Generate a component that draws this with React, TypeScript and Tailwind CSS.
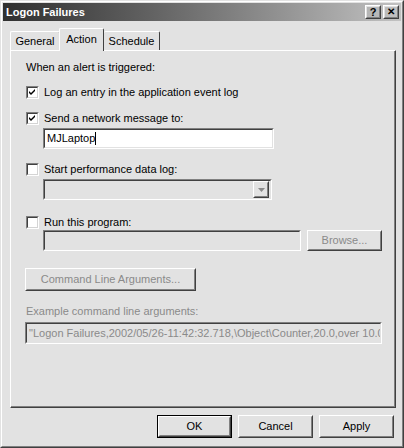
import React from "react";

const font = { fontFamily: '"Liberation Sans", Arial, sans-serif' };

function Check({ checked }: { checked?: boolean }) {
  return (
    <div className="w-[13px] h-[13px] shrink-0 border border-t-[#808080] border-l-[#808080] border-r-white border-b-white">
      <div className="w-full h-full bg-white border border-t-[#404040] border-l-[#404040] border-r-[#d4d4d4] border-b-[#d4d4d4]">
        {checked && (
          <svg width="9" height="9" viewBox="0 0 9 9" className="block">
            <path d="M1 3 L3 5 L7 1 L7 3 L3 7 L1 5 Z" fill="#000" />
          </svg>
        )}
      </div>
    </div>
  );
}

function Sunken({ className, children, white }: { className: string; children?: React.ReactNode; white?: boolean }) {
  return (
    <div className={`border border-t-[#808080] border-l-[#808080] border-r-white border-b-white ${className}`}>
      <div className={`w-full h-full border border-t-[#404040] border-l-[#404040] border-r-[#e2e2e2] border-b-[#e2e2e2] ${white ? "bg-white" : "bg-[#e2e2e2]"} flex items-center overflow-hidden`}>
        {children}
      </div>
    </div>
  );
}

function Btn({ label, className, disabled, def, children }: { label: string; className: string; disabled?: boolean; def?: boolean; children?: React.ReactNode }) {
  const inner = (
    <div className="w-full h-full border border-t-white border-l-white border-r-[#404040] border-b-[#404040]">
      <div className="w-full h-full border border-t-[#e2e2e2] border-l-[#e2e2e2] border-r-[#808080] border-b-[#808080] flex items-center justify-center">
        {children ?? <span className={disabled ? "text-[#8a8a8a]" : "text-black"}>{label}</span>}
      </div>
    </div>
  );
  return def ? <div className={`border border-black ${className}`}>{inner}</div> : <div className={className}>{inner}</div>;
}

export default function App() {
  return (
    <div className="w-[404px] h-[448px] bg-[#e2e2e2] text-[11px] leading-none" style={font}>
      <div className="w-full h-full border border-t-[#e2e2e2] border-l-[#e2e2e2] border-r-[#404040] border-b-[#404040]">
        <div className="w-full h-full border border-t-white border-l-white border-r-[#808080] border-b-[#808080] flex flex-col px-[1px] pt-[1px]">
          {/* title bar */}
          <div className="h-[18px] bg-gradient-to-r from-[#303030] to-[#c2c2c2] flex items-center justify-between pl-[3px] pr-[2px]">
            <span className="text-white font-bold text-[11px]">Logon Failures</span>
            <div className="flex gap-[2px]">
              <Btn label="?" className="w-[16px] h-[14px] font-bold text-[11px]" />
              <Btn label="✕" className="w-[16px] h-[14px] font-bold text-[10px]" />
            </div>
          </div>

          {/* tabs */}
          <div className="flex items-end pl-[7px] mt-[6px] h-[23px]">
            <div className="h-[19px] w-[50px] border-l border-t border-white border-r border-r-[#404040] rounded-t-[2px] flex items-center justify-center">General</div>
            <div className="h-[23px] w-[45px] -ml-[1px] border-l border-t border-white border-r border-r-[#404040] rounded-t-[2px] flex items-center justify-center pb-[2px] z-10 bg-[#e2e2e2] -mb-[1px]">Action</div>
            <div className="h-[19px] w-[56px] border-t border-white border-r border-r-[#404040] rounded-t-[2px] flex items-center justify-center">Schedule</div>
          </div>

          {/* panel */}
          <div className="ml-[7px] w-[386px] h-[358px] border border-t-white border-l-white border-r-[#404040] border-b-[#404040]">
            <div className="w-full h-full border-r border-b border-[#808080] pl-[15px] pt-[11px] flex flex-col">
              <div>When an alert is triggered:</div>
              <div className="flex items-center gap-[5px] mt-[13px]">
                <Check checked />
                <span>Log an entry in the application event log</span>
              </div>
              <div className="flex items-center gap-[5px] mt-[13px]">
                <Check checked />
                <span>Send a network message to:</span>
              </div>
              <Sunken white className="ml-[17px] mt-[3px] w-[231px] h-[21px]">
                <span className="pl-[2px]">MJLaptop</span>
                <span className="w-[1px] h-[13px] bg-black" />
              </Sunken>
              <div className="flex items-center gap-[5px] mt-[14px]">
                <Check />
                <span>Start performance data log:</span>
              </div>
              <Sunken className="ml-[17px] mt-[3px] w-[229px] h-[21px]">
                <div className="ml-auto mr-[1px] w-[16px] h-[17px]">
                  <Btn label="" className="w-full h-full">
                    <svg width="7" height="4" viewBox="0 0 7 4" className="block">
                      <path d="M0 0 H7 L3.5 4 Z" fill="#8a8a8a" />
                    </svg>
                  </Btn>
                </div>
              </Sunken>
              <div className="flex items-center gap-[5px] mt-[16px]">
                <Check />
                <span>Run this program:</span>
              </div>
              <div className="flex items-center mt-[1px] ml-[17px]">
                <Sunken className="w-[258px] h-[21px]" />
                <Btn label="Browse..." disabled className="ml-[6px] w-[75px] h-[21px]" />
              </div>
              <Btn label="Command Line Arguments..." disabled className="mt-[17px] -ml-[1px] w-[171px] h-[23px]" />
              <div className="mt-[15px] text-[#8a8a8a]">Example command line arguments:</div>
              <Sunken className="mt-[5px] -ml-[1px] w-[357px] h-[22px]">
                <span className="pl-[2px] text-[#8a8a8a] whitespace-nowrap">"Logon Failures,2002/05/26-11:42:32.718,\Object\Counter,20.0,over 10.0</span>
              </Sunken>
            </div>
          </div>

          {/* buttons */}
          <div className="flex gap-[6px] justify-end pr-[7px] mt-[7px]">
            <Btn label="OK" def className="w-[75px] h-[23px]" />
            <Btn label="Cancel" className="w-[75px] h-[23px]" />
            <Btn label="Apply" className="w-[75px] h-[23px]" />
          </div>
        </div>
      </div>
    </div>
  );
}
